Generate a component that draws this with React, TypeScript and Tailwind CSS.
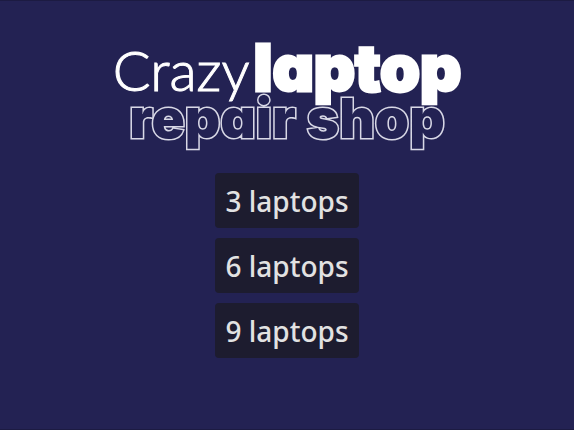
const levels = [3, 6, 9]

export default function App() {
  return (
    <main className="flex min-h-screen flex-col items-center border-y border-[#1c1b42] bg-[#232253] pt-10">
      {/* Title */}
      <h1 className="flex flex-col items-center text-white">
        <span className="flex items-baseline gap-1 leading-[54px]">
          <span className="font-['Lato',sans-serif] text-[56px] font-light [-webkit-text-stroke:1px_white]">Crazy</span>
          <span className="font-['Inter',sans-serif] text-[64px] font-black [font-feature-settings:'cv11'] [-webkit-text-stroke:3px_white]">
            laptop
          </span>
        </span>
        <span className="font-['Inter',sans-serif] text-[55px] leading-[42px] font-black whitespace-nowrap text-[#232253] [font-feature-settings:'cv11'] [paint-order:stroke_fill] [-webkit-text-stroke:3px_#d8d8e6]">
          repair shop
        </span>
      </h1>

      {/* Level buttons */}
      <div className="mt-[34px] flex flex-col gap-[10px]">
        {levels.map(count => (
          <button
            key={count}
            type="button"
            className="h-[55px] rounded-[4px] bg-[#1d1c2f] px-[10px] font-['Noto_Sans',sans-serif] text-[28px] font-medium text-[#e2e2e2]"
          >
            {count} laptops
          </button>
        ))}
      </div>
    </main>
  )
}
